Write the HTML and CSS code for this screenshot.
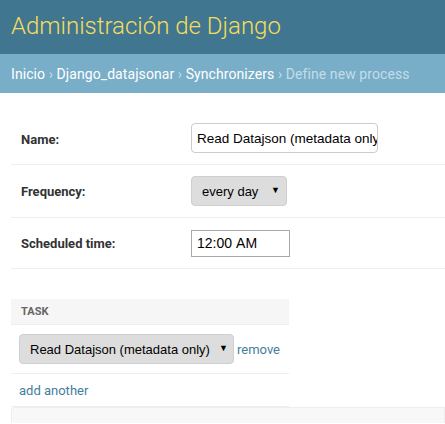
FILE: index.html
```html
<!DOCTYPE html>
<html lang="es">
<head>
<meta charset="utf-8">
<title>Define new process</title>
<link rel="stylesheet" href="styles.css">
</head>
<body>
<header class="header">
  <h1 class="branding">Administración de Django</h1>
</header>
<nav class="breadcrumbs">
  <a href="#">Inicio</a> › <a href="#">Django_datajsonar</a> › <a href="#">Synchronizers</a> › <span class="current">Define new process</span>
</nav>
<main class="content">
  <fieldset class="module">
    <div class="form-row row-name">
      <label class="label">Name:</label>
      <div class="text-input">Read Datajson (metadata only)</div>
    </div>
    <div class="form-row row-freq">
      <label class="label">Frequency:</label>
      <div class="select select-freq"><span>every day</span><span class="arrow">▼</span></div>
    </div>
    <div class="form-row row-time">
      <label class="label">Scheduled time:</label>
      <div class="time-input"><span>12:00</span><span>AM</span></div>
    </div>
  </fieldset>

  <div class="inline">
    <div class="inline-head">Task</div>
    <div class="inline-row">
      <div class="select select-task"><span>Read Datajson (metadata only)</span><span class="arrow">▼</span></div>
      <a href="#" class="link">remove</a>
    </div>
    <div class="inline-add"><a href="#" class="link">add another</a></div>
  </div>

  <div class="submit-row"></div>
</main>
</body>
</html>
```
FILE: styles.css
```css
* { box-sizing: border-box; }
html, body { margin: 0; padding: 0; background: #fff; }
body {
  font-family: Roboto, "Noto Sans", sans-serif;
  font-size: 14px;
  color: #333;
  overflow: hidden;
}
a { text-decoration: none; }

.header {
  background: #417690;
  height: 54px;
  padding: 0 11px;
  display: flex;
  align-items: center;
}
.branding {
  margin: 0;
  font-weight: 300;
  font-size: 24px;
  color: #f5dd5d;
  line-height: 1;
  padding-bottom: 2px;
}

.breadcrumbs {
  background: #79aec8;
  height: 39px;
  padding: 0 11px;
  display: flex;
  align-items: center;
  white-space: pre;
  color: #c4dce8;
  font-size: 14px;
  letter-spacing: 0.08px;
}
.breadcrumbs a { color: #fff; }
.breadcrumbs .current { color: #c4dce8; }

.content {
  padding: 21px 0 0 11px;
}
.module {
  border: 0;
  margin: 0;
  padding: 0;
}
.form-row {
  display: flex;
  align-items: center;
  padding: 0 10px;
  border-bottom: 1px solid #eee;
}
.row-name { height: 51px; }
.row-freq { height: 53px; }
.row-time { height: 51px; }
.label {
  width: 170px;
  flex: none;
  font-weight: bold;
  font-size: 13px;
  color: #333;
}

.text-input {
  width: 187px;
  height: 30px;
  border: 1px solid #ccc;
  border-radius: 4px;
  padding: 0 5px;
  display: flex;
  align-items: center;
  overflow: hidden;
  white-space: nowrap;
  font-family: "Liberation Sans", Arial, sans-serif;
  font-size: 13.5px;
  color: #000;
  margin-top: -2px;
}

.select {
  display: flex;
  align-items: center;
  justify-content: space-between;
  height: 30px;
  background: #dddddd;
  border: 1px solid #cfcfcf;
  border-radius: 4px;
  font-family: "Liberation Sans", Arial, sans-serif;
  font-size: 13px;
  color: #000;
  white-space: nowrap;
}
.select .arrow {
  font-size: 9px;
  color: #000;
  margin-top: -3px;
}
.select-freq {
  width: 96px;
  padding: 0 6px 0 10px;
}
.select-task {
  width: 215px;
  padding: 0 5px 0 10px;
}

.time-input {
  width: 99px;
  height: 27px;
  border: 1px solid #a9a9a9;
  padding: 0 5px;
  display: flex;
  align-items: center;
  gap: 4px;
  font-family: "Liberation Sans", Arial, sans-serif;
  font-size: 14px;
  color: #000;
}

.inline {
  width: 278px;
  margin-top: 30px;
}
.inline-head {
  background: #f6f6f6;
  height: 26px;
  padding: 0 10px;
  display: flex;
  align-items: center;
  text-transform: uppercase;
  font-size: 11px;
  font-weight: bold;
  color: #666;
  border-bottom: 1px solid #eee;
}
.inline-row {
  display: flex;
  align-items: center;
  gap: 3px;
  height: 49px;
  padding: 0 8px;
  border-bottom: 1px solid #eee;
}
.link { color: #447e9b; font-size: 13px; }
.inline-add {
  height: 33px;
  padding: 0 8px;
  display: flex;
  align-items: center;
  border-bottom: 1px solid #eee;
}

.submit-row {
  height: 16px;
  background: #f8f8f8;
  border: 1px solid #eee;
  border-bottom: 0;
  border-radius: 4px 0 0 0;
}
```
